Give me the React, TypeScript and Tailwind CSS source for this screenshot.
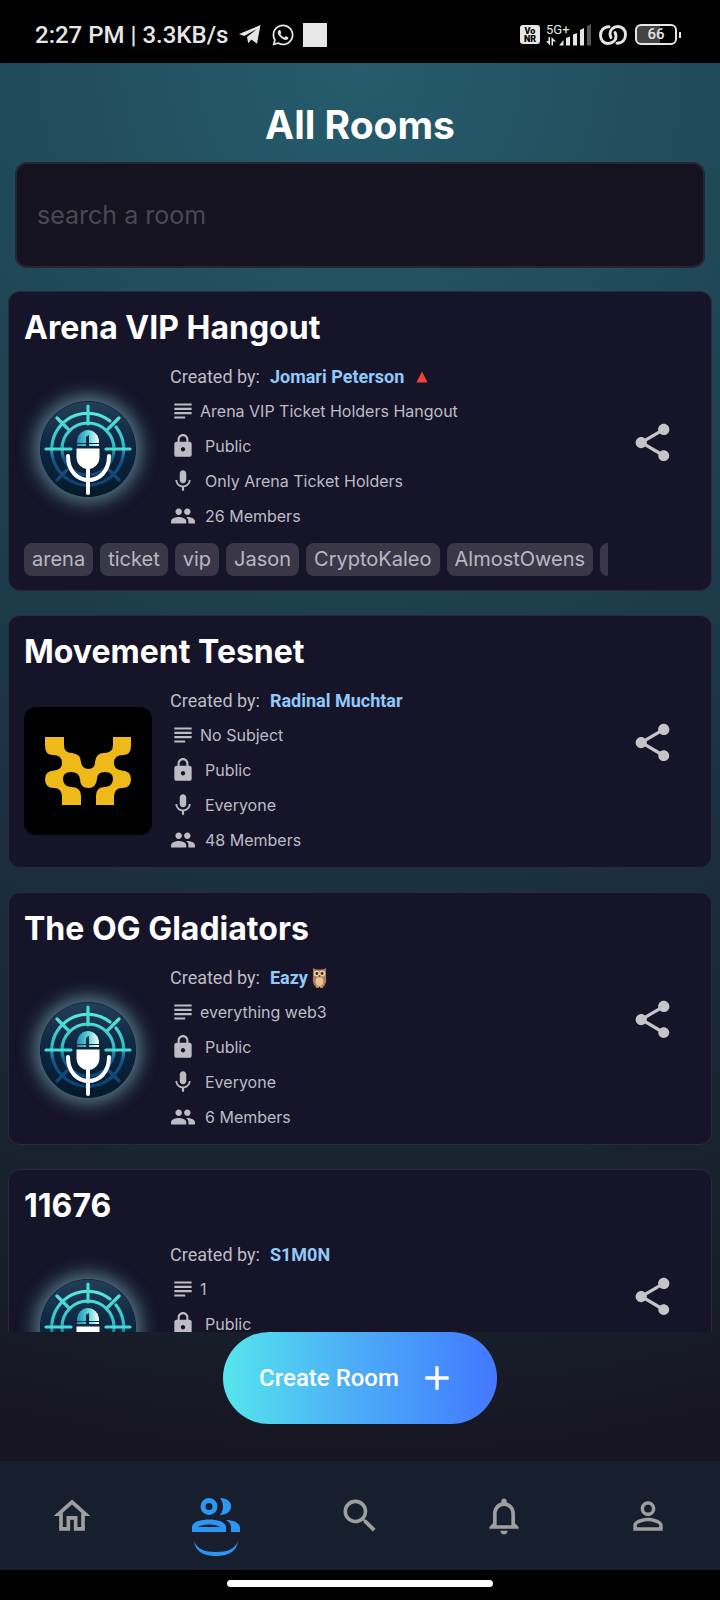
import type { ReactNode } from "react";
import {
  MdLock,
  MdMic,
  MdOutlineHome,
  MdNotificationsNone,
  MdPeople,
  MdPersonOutline,
  MdSearch,
  MdShare,
  MdSubject,
  MdAdd,
} from "react-icons/md";
import { FaWhatsapp } from "react-icons/fa";

type Room = {
  title: string;
  creator: string;
  mark?: "triangle" | "owl";
  subject: string;
  speakers: string;
  members: string;
  avatar: "mic" | "movement";
  tags?: string[];
};

const rooms: Room[] = [
  {
    title: "Arena VIP Hangout",
    creator: "Jomari Peterson",
    mark: "triangle",
    subject: "Arena VIP Ticket Holders Hangout",
    speakers: "Only Arena Ticket Holders",
    members: "26 Members",
    avatar: "mic",
    tags: ["arena", "ticket", "vip", "Jason", "CryptoKaleo", "AlmostOwens", "Arena"],
  },
  {
    title: "Movement Tesnet",
    creator: "Radinal Muchtar",
    subject: "No Subject",
    speakers: "Everyone",
    members: "48 Members",
    avatar: "movement",
  },
  {
    title: "The OG Gladiators",
    creator: "Eazy",
    mark: "owl",
    subject: "everything web3",
    speakers: "Everyone",
    members: "6 Members",
    avatar: "mic",
  },
  {
    title: "11676",
    creator: "S1M0N",
    subject: "1",
    speakers: "Everyone",
    members: "1 Members",
    avatar: "mic",
  },
];

function StatusBar() {
  return (
    <header className="flex h-[63px] shrink-0 items-center justify-between bg-black pt-1.5 pr-[39px] pl-[35px] font-['Roboto',sans-serif] text-[#e6e6e6]">
      <div className="flex items-center">
        <span className="text-2xl font-medium">2:27 PM | 3.3KB/s</span>
        <svg className="ml-2.5 h-5 w-[23px]" viewBox="0 0 23 20" fill="currentColor" aria-hidden="true">
          <path d="M1 9 22.5 0 19 18.8 13.3 14.6 10.2 18.2 9 12 19 4 6.2 11Z" />
        </svg>
        <FaWhatsapp className="ml-2.5 size-6" aria-hidden="true" />
        <span className="ml-2 size-6 bg-[#e6e6e6]" />
      </div>
      <div className="flex items-center">
        <span className="grid h-[19px] w-5 place-content-center rounded-[3px] bg-[#e6e6e6] text-center text-[9px] leading-[8px] font-black text-black">
          <span>Vo</span>
          <span>NR</span>
        </span>
        <svg className="ml-1.5 h-6 w-[46px]" viewBox="0 0 46 24" fill="currentColor" aria-hidden="true">
          <text x="0" y="10.5" fontSize="13" fontFamily="Roboto">5G+</text>
          <path d="M2.500 14v4H0l4 4.500V14ZM5.500 22.500v-8.500l4.500 4.500H7v4ZM13 22.500l4.500-5.500v5.500ZM20 15l4-1.500v9h-4ZM27 11.500l4-1.500v12.500h-4ZM34 7l4-2v17.500h-4Z" />
          <path d="M41 3l4-2v21.500h-4Z" fill="#555" />
        </svg>
        <svg className="ml-[7px] h-5 w-7" viewBox="0 0 28 20" fill="none" stroke="currentColor" strokeWidth="2.900" strokeLinecap="round" aria-hidden="true">
          <path d="M10 1.800C4 2 1.500 6 1.500 10.500C1.500 15.500 5 18.500 9 18.500C14 18.500 17 15 17 11.500C17 10 16.500 8.500 16 7.500" />
          <path d="M18 18.200C24 18 26.500 14 26.500 9.500C26.500 4.500 23 1.500 19 1.500C14 1.500 11 5 11 8.500C11 10 11.500 11.500 12 12.500" />
        </svg>
        <span className="ml-2 grid h-[21px] w-[42px] place-items-center rounded-md border-2 border-[#e6e6e6] bg-linear-to-r from-[#444] from-60% to-black to-60% text-[15px] leading-none font-medium">
          66
        </span>
        <span className="ml-0.5 h-1.5 w-0.5 bg-[#e6e6e6]" />
      </div>
    </header>
  );
}

function MicAvatar() {
  return (
    <span className="grid size-32 place-items-center pt-[5px]">
      <svg className="size-24 rounded-full shadow-[0_0_18px_5px_#557d8a]" viewBox="0 0 96 96" fill="none" aria-hidden="true">
        <defs>
          <linearGradient id="disc" x1="0" y1="0" x2="0" y2="1">
            <stop offset="0" stopColor="#233f58" />
            <stop offset="0.5" stopColor="#0c2540" />
            <stop offset="1" stopColor="#04192a" />
          </linearGradient>
          <linearGradient id="ring" gradientUnits="userSpaceOnUse" x1="0" y1="10" x2="0" y2="85">
            <stop offset="0" stopColor="#5cebdc" />
            <stop offset="0.45" stopColor="#32bcc8" />
            <stop offset="0.65" stopColor="#15548a" />
            <stop offset="1" stopColor="#103f6c" />
          </linearGradient>
          <linearGradient id="head" x1="0" y1="0" x2="1" y2="0">
            <stop offset="0" stopColor="#228fb2" />
            <stop offset="0.5" stopColor="#56d3d8" />
            <stop offset="1" stopColor="#fff" />
          </linearGradient>
        </defs>
        <circle cx="48" cy="48" r="47.500" fill="url(#disc)" />
        <g stroke="url(#ring)" strokeWidth="3.200" strokeLinecap="round">
          <path d="M70 20A36 36 0 1 0 76 26" />
          <circle cx="48" cy="48" r="26" />
          <path d="M17 17 29 29M79 17 67 29M17 79 27 69M79 79 69 69" />
        </g>
        <g stroke="#46dcd6" strokeWidth="3.200" strokeLinecap="round">
          <path d="M48 5V23M6 48H31M66 48H90" />
        </g>
        <path d="M37 45V41a11 12 0 0 1 22 0V45Z" fill="url(#head)" />
        <path d="M46 45V36l3-2v11ZM37 42h22v1H37Z" fill="#0a2940" />
        <path d="M36.500 47.500h23V56a11.500 12 0 0 1-23 0Z" fill="#fff" />
        <path d="M28 55c0 32 41 32 41 0M48 66v26" stroke="#fff" strokeWidth="4" strokeLinecap="round" />
      </svg>
    </span>
  );
}

function MovementAvatar() {
  return (
    <svg className="size-32 rounded-xl bg-black" viewBox="0 0 128 128" aria-hidden="true">
      <path
        fill="#f0b91a"
        d="M21 30H40V38Q40 46 48 46Q57 47 57 55Q58 62 64.500 62Q71 62 71 55Q72 46 80 46Q89 46 89 38V30H107V39Q107 48 99 48Q90 48 90 56Q90 63 98 63.500Q107 64 107 72Q107 81 98 81Q90 81 90 90V98H72V89Q72 80 81 80Q89 79 89 72Q89 65 81 65Q73 65 73 72Q72 81 64.500 81Q56 81 56 72Q55 65 47 65Q39 65 39 72Q39 79 47 80Q57 80 57 89V98H38V90Q38 81 30 81Q21 81 21 72Q21 64 30 63.500Q38 63 38 56Q38 48 29 48Q21 48 21 39Z"
      />
    </svg>
  );
}

function Triangle() {
  return (
    <svg className="ml-3 h-3 w-3" viewBox="0 0 12 12" aria-hidden="true">
      <path d="M6 0.500 11.500 11.500H0.500Z" fill="#f44336" />
    </svg>
  );
}

function Owl() {
  return (
    <svg className="ml-1 h-5 w-[15px]" viewBox="0 0 15 20" aria-hidden="true">
      <path d="M1 0Q4 2 7.500 1.500Q11 2 14 0L14 8Q15 13 13 17L11 19H4L2 17Q0 13 1 8Z" fill="#b17a5c" />
      <ellipse cx="7.500" cy="13.500" rx="4" ry="4.500" fill="#eac29a" />
      <circle cx="4.800" cy="5.500" r="3" fill="#f2cf9c" />
      <circle cx="10.200" cy="5.500" r="3" fill="#f2cf9c" />
      <circle cx="4.900" cy="5.500" r="1.400" fill="#33261f" />
      <circle cx="10.100" cy="5.500" r="1.400" fill="#33261f" />
      <path d="M6.500 7h2l-1 3Z" fill="#77502e" />
      <path d="M4 19h3M8 19h3" stroke="#e8a33b" strokeWidth="1.500" />
    </svg>
  );
}

function Detail({ icon, children }: { icon: ReactNode; children: ReactNode }) {
  return (
    <li className="flex h-[35px] items-center gap-[9px]">
      {icon}
      <span>{children}</span>
    </li>
  );
}

function RoomCard({ room }: { room: Room }) {
  return (
    <article className="flex rounded-xl border border-[#2b2840] bg-[#151429] pr-[15px] pb-2.5 pl-[15px]">
      <div className="min-w-0 flex-1">
        <h2 className="pt-[11px] text-[32px] leading-[50px] font-bold text-white">{room.title}</h2>
        <div className="mt-[7px] flex items-center gap-[18px]">
          {room.avatar === "mic" ? <MicAvatar /> : <MovementAvatar />}
          <div className="text-base text-[#bdbcc4]">
            <p className="flex h-[34px] items-center font-['Roboto',sans-serif] text-lg">
              Created by:
              <a href="#creator" className="ml-2.5 font-bold text-[#90caf9]">{room.creator}</a>
              {room.mark === "triangle" && <Triangle />}
              {room.mark === "owl" && <Owl />}
            </p>
            <ul>
              <li className="flex h-[34px] items-center gap-1">
                <MdSubject className="size-[26px]" />
                <span>{room.subject}</span>
              </li>
              <Detail icon={<MdLock className="size-[26px]" />}>Public</Detail>
              <Detail icon={<MdMic className="size-[26px]" />}>{room.speakers}</Detail>
              <Detail icon={<MdPeople className="size-[26px]" />}>{room.members}</Detail>
            </ul>
          </div>
        </div>
        {room.tags && (
          <ul className="mt-2.5 mb-1 flex gap-[7px] overflow-hidden text-xl text-[#b9b7c2]">
            {room.tags.map((tag) => (
              <li key={tag} className="h-[33px] shrink-0 rounded-lg bg-[#393748] px-2 leading-[33px]">
                {tag}
              </li>
            ))}
          </ul>
        )}
      </div>
      <div className="flex w-[88px] shrink-0 items-center justify-center pt-3">
        <button type="button" aria-label={`Share ${room.title}`} className="text-[#c5c5c8]">
          <MdShare className="size-[45px]" />
        </button>
      </div>
    </article>
  );
}

function GroupIcon() {
  return (
    <svg className="h-[60px] w-12" viewBox="0 0 48 60" fill="currentColor" aria-hidden="true">
      <path fillRule="evenodd" d="M17 0a8.500 8.500 0 0 1 0 17a8.500 8.500 0 0 1 0-17Zm0 5a3.500 3.500 0 0 0 0 7a3.500 3.500 0 0 0 0-7Z" />
      <path d="M28 0c15 0 15 17 0 17c4-5 4-12 0-17Z" />
      <path fillRule="evenodd" d="M0 34V29c0-10 34-10 34 0v5ZM6 29h22c-4-3.500-18-3.500-22 0Z" />
      <path d="M34 22c8 0 14 3 14 8v4h-9v-5c0-3-2-5-5-7Z" />
      <path d="M2 43C5 51 12 54 24 54S43 51 46 43C45 52 38 58 24 58S3 52 2 43Z" />
    </svg>
  );
}

function BottomNav() {
  const items = [
    { label: "Home", icon: <MdOutlineHome className="size-11" /> },
    { label: "Rooms", icon: <GroupIcon />, active: true },
    { label: "Search", icon: <MdSearch className="size-11" /> },
    { label: "Notifications", icon: <MdNotificationsNone className="size-11" /> },
    { label: "Profile", icon: <MdPersonOutline className="size-11" /> },
  ];
  return (
    <nav className="grid h-[109px] shrink-0 grid-cols-5 bg-[#171e2d] text-[#9e9e9e]">
      {items.map((item) => (
        <a
          key={item.label}
          href={`#${item.label.toLowerCase()}`}
          aria-label={item.label}
          className={item.active ? "flex items-start justify-center pt-[37px] text-[#2a98f2]" : "flex items-start justify-center pt-[33px]"}
        >
          {item.icon}
        </a>
      ))}
    </nav>
  );
}

export default function App() {
  return (
    <div className="flex h-screen flex-col bg-black font-['Inter',sans-serif]">
      <StatusBar />
      <div className="flex min-h-0 flex-1 flex-col bg-[radial-gradient(circle_farthest-side_at_50%_0%,#265c6d_0%,#22505f_18%,#1d3f4d_40%,#1b3040_59%,#182430_79%,#171e2a_91%,#171521_100%)]">
        <main className="min-h-0 flex-1 overflow-hidden">
          <h1 className="pt-[38px] text-center text-[39px] leading-[48px] font-bold text-white">All Rooms</h1>
          <div className="px-[15px] pt-[13px]">
            <input
              type="text"
              aria-label="Search rooms"
              placeholder="search a room"
              className="h-[106px] w-full rounded-xl border-2 border-[#272536] bg-[#15131f] px-5 text-[25px] text-white placeholder:text-[#4b4852]"
            />
          </div>
          <div className="mt-[23px] flex flex-col gap-6 px-2">
            {rooms.map((room) => (
              <RoomCard key={room.title} room={room} />
            ))}
          </div>
        </main>
        <div className="flex h-[129px] shrink-0 items-start justify-center">
          <button
            type="button"
            className="flex h-[92px] items-center gap-[18px] rounded-full bg-linear-to-r from-[#56e6ec] via-[#4caaf7] to-[#4477ff] pr-10 pl-9 font-['Roboto',sans-serif] text-2xl font-medium text-white"
          >
            Create Room
            <MdAdd className="size-10" />
          </button>
        </div>
      </div>
      <BottomNav />
      <div className="flex h-[30px] shrink-0 items-center justify-center pb-1">
        <span className="h-[7px] w-[266px] rounded-full bg-white" />
      </div>
    </div>
  );
}
